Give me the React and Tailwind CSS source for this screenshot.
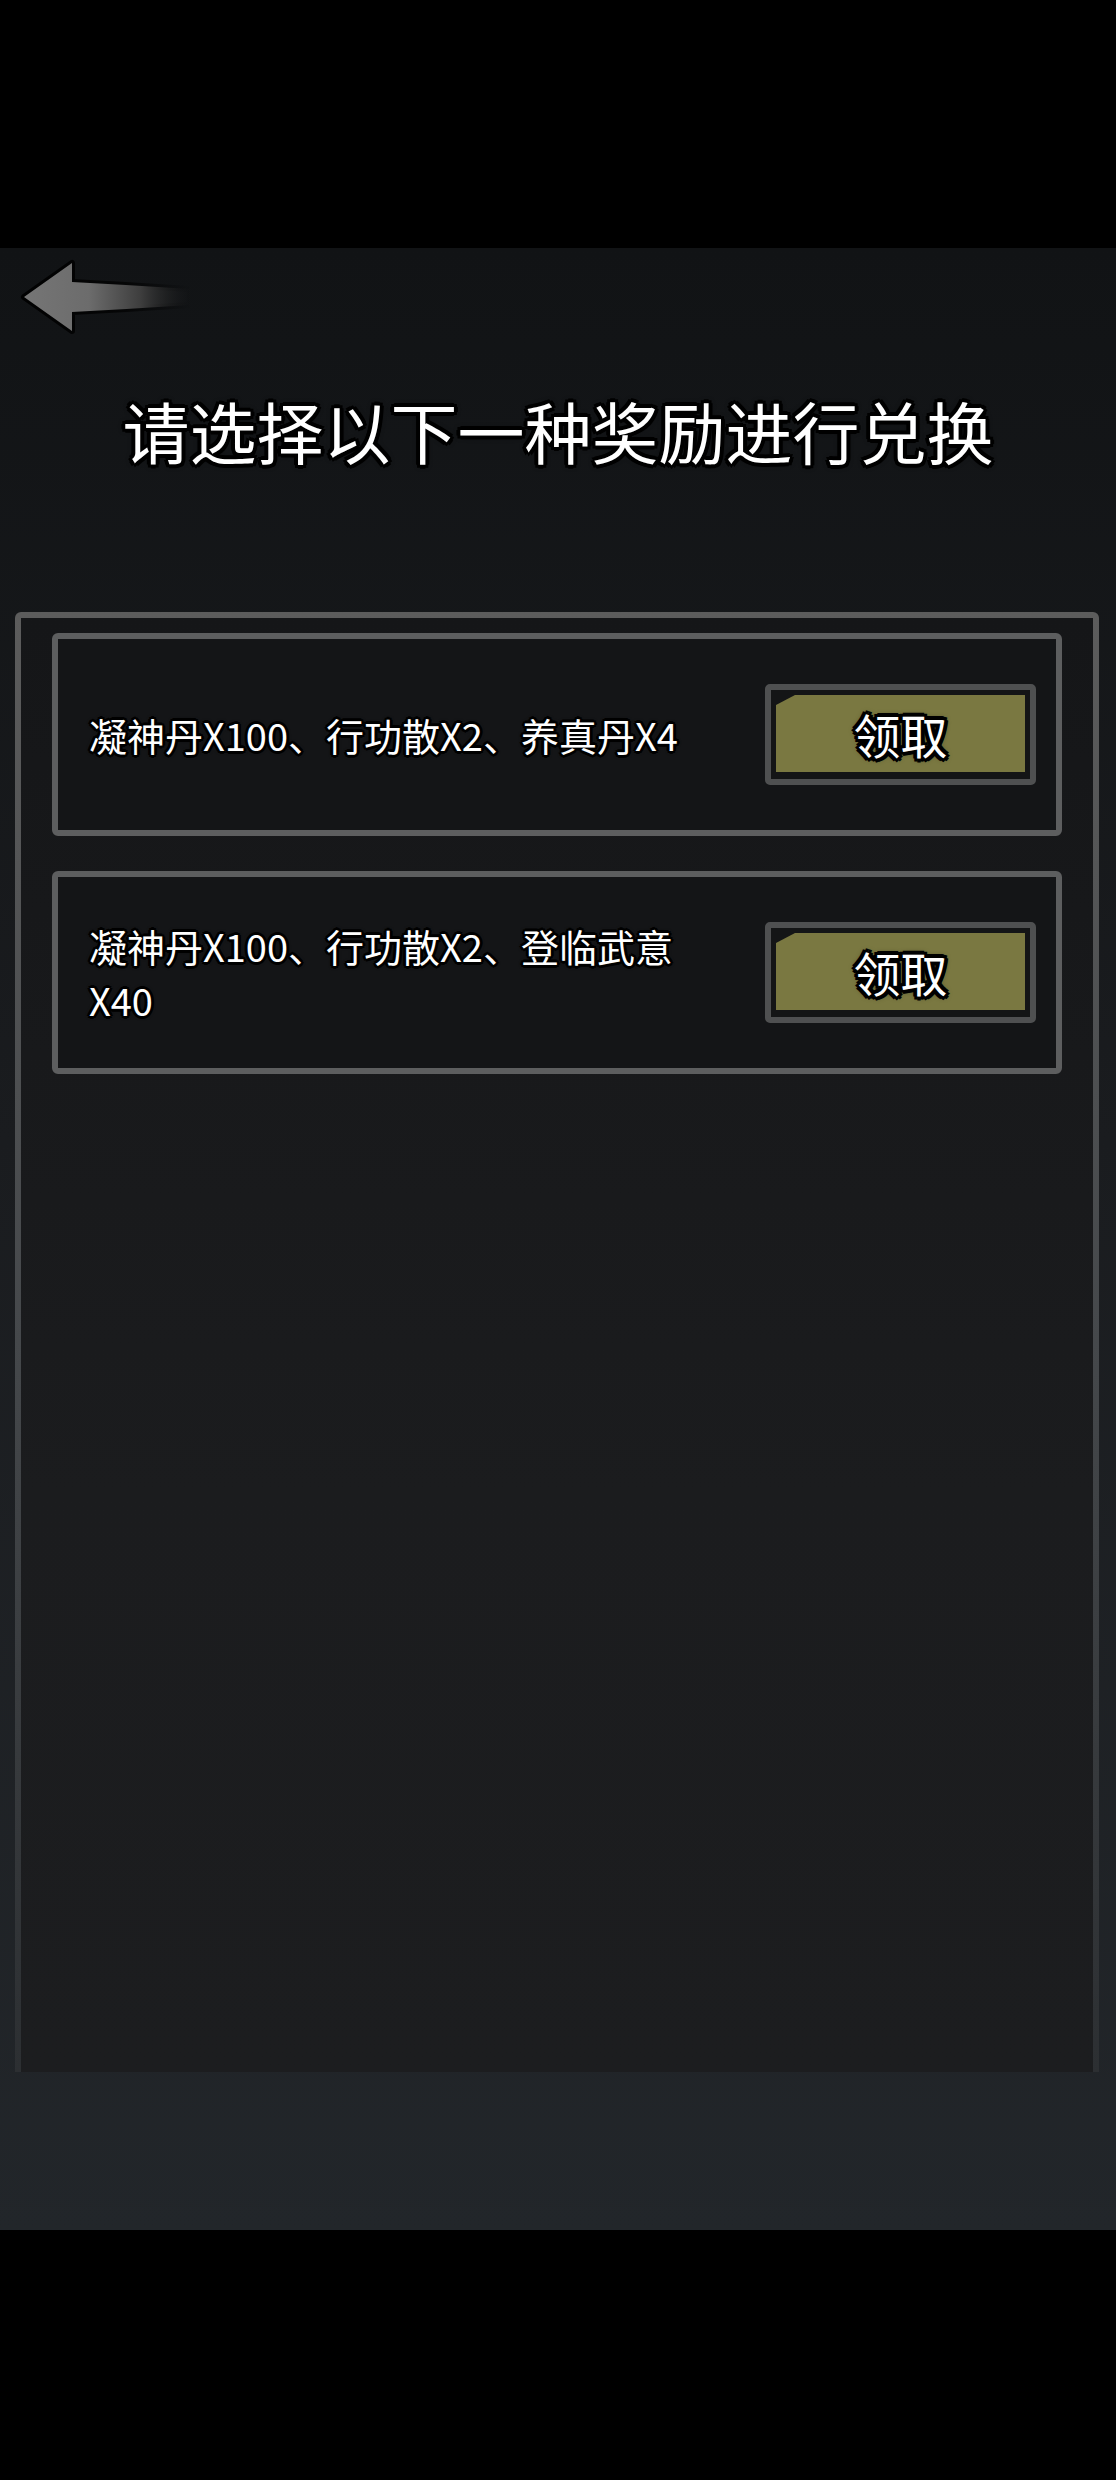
import React from "react";

const outlineSm =
  "[text-shadow:-2px_-2px_0_#000,2px_-2px_0_#000,-2px_2px_0_#000,2px_2px_0_#000,0_3px_0_#000,0_-3px_0_#000,3px_0_0_#000,-3px_0_0_#000,0_0_4px_#000]";
const outlineLg =
  "[text-shadow:-3px_-3px_0_#000,3px_-3px_0_#000,-3px_3px_0_#000,3px_3px_0_#000,0_4px_0_#000,0_-4px_0_#000,4px_0_0_#000,-4px_0_0_#000,0_0_6px_#000]";

function BackArrow() {
  return (
    <svg width="200" height="90" viewBox="0 250 200 90" className="block">
      <defs>
        <linearGradient id="arrowFill" x1="20" y1="0" x2="192" y2="0" gradientUnits="userSpaceOnUse">
          <stop offset="0" stopColor="#767676" />
          <stop offset="0.4" stopColor="#6c6c6c" />
          <stop offset="0.7" stopColor="#3e3e3e" />
          <stop offset="1" stopColor="#1a1b1c" stopOpacity="0" />
        </linearGradient>
        <linearGradient id="arrowStroke" x1="20" y1="0" x2="192" y2="0" gradientUnits="userSpaceOnUse">
          <stop offset="0" stopColor="#000" stopOpacity="0.95" />
          <stop offset="0.6" stopColor="#000" stopOpacity="0.7" />
          <stop offset="1" stopColor="#000" stopOpacity="0" />
        </linearGradient>
      </defs>
      <path
        d="M24 297 L72 263 L72 282 Q130 285 190 289 L190 305 Q130 309 72 312 L72 331 Z"
        fill="url(#arrowFill)"
        stroke="url(#arrowStroke)"
        strokeWidth="6"
        strokeLinejoin="round"
        paintOrder="stroke"
      />
    </svg>
  );
}

function ClaimButton() {
  return (
    <div className="w-[271px] h-[101px] shrink-0 border-[6px] border-[#4f5051] rounded-[5px] bg-[#141516] pt-[5px] px-[5px] pb-[7px]">
      <div className="w-full h-full bg-[#7a7841] [clip-path:polygon(19px_0,100%_0,100%_100%,0_100%,0_10px)] flex items-center justify-center">
        <span className={`text-white text-[47px] leading-none ${outlineLg}`}>领取</span>
      </div>
    </div>
  );
}

function RewardCard({ children }) {
  return (
    <div className="h-[203px] border-[6px] border-[#5d5e5f] rounded-[6px] bg-[#141517] flex items-center justify-between pl-[31px] pr-[20px]">
      <div className={`text-white text-[38px] leading-[54px] ${outlineSm}`}>{children}</div>
      <ClaimButton />
    </div>
  );
}

export default function App() {
  return (
    <div className="w-[1116px] h-[2480px] bg-black flex flex-col font-['Noto_Sans_CJK_SC','Noto_Sans',sans-serif]">
      <div className="h-[248px] bg-black" />
      <div className="h-[1982px] bg-[linear-gradient(to_bottom,#111315,#1a1c1f_45%,#22262a)] flex flex-col">
        <div className="mt-[2px]">
          <BackArrow />
        </div>
        <h1 className={`mt-[51px] text-center text-white text-[67px] leading-[78px] font-normal ${outlineLg}`}>
          请选择以下一种奖励进行兑换
        </h1>
        <div className="mt-[143px] ml-[15px] mr-[17px] h-[1460px] rounded-t-[6px] bg-[linear-gradient(to_bottom,#5c5c5c,#45484b_50%,#2c2f32)] pt-[6px] px-[6px] pb-0 flex">
          <div className="flex-1 bg-[linear-gradient(to_bottom,#151618,#1b1c1e_60%,#1c1d1f)] pt-[15px] px-[31px] flex flex-col gap-[35px]">
            <RewardCard>凝神丹X100、行功散X2、养真丹X4</RewardCard>
            <RewardCard>
              凝神丹X100、行功散X2、登临武意
              <br />
              X40
            </RewardCard>
          </div>
        </div>
      </div>
      <div className="flex-1 bg-black" />
    </div>
  );
}
